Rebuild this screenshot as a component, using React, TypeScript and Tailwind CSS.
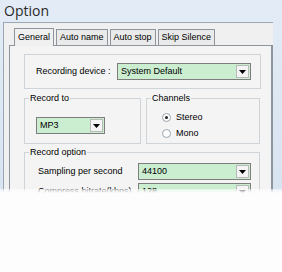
import { ReactNode } from 'react';

const font = { fontFamily: '"Liberation Sans", Arial, sans-serif' };

function Combo({ value, className }: { value: string; className: string }) {
  return (
    <div className={`flex h-[17px] items-stretch border border-[#7d7d7d] bg-[#cbeed0] ${className}`}>
      <div className="flex-1 pl-[3px] text-[9px] leading-[15px] text-black">{value}</div>
      <div className="m-[1px] flex w-[13px] items-center justify-center border border-[#b9b9b9] bg-[#f4f4f4]">
        <svg width="7" height="4" viewBox="0 0 7 4"><path d="M0 0h7L3.5 4z" fill="#000" /></svg>
      </div>
    </div>
  );
}

function Group({ title, className, children }: { title: string; className: string; children: ReactNode }) {
  return (
    <div className={`relative border border-[#cfd4d8] ${className}`}>
      <span className="absolute left-[4px] top-[-7px] bg-[#f4f4f4] px-[1px] text-[9px] leading-[12px] text-black">{title}</span>
      {children}
    </div>
  );
}

function Radio({ checked, label }: { checked: boolean; label: string }) {
  return (
    <div className="flex items-center gap-[5px]">
      <div className="flex h-[9px] w-[9px] items-center justify-center rounded-full border border-[#9aa3ab] bg-white">
        {checked ? <div className="h-[3px] w-[3px] rounded-full bg-[#222]" /> : null}
      </div>
      <span className="text-[9px] leading-[12px] text-black">{label}</span>
    </div>
  );
}

export default function App() {
  const tabs = ['General', 'Auto name', 'Auto stop', 'Skip Silence'];
  return (
    <div className="relative flex h-[272px] w-[282px] flex-col overflow-hidden bg-gradient-to-b from-[#e3ecf6] to-[#d3e0ee]" style={font}>
      <div className="h-[22px] pl-[4px] pt-[2px] text-[14px] leading-[18px] text-[#2a2a2a]" style={{ fontFamily: '"Open Sans", "Noto Sans", sans-serif' }}>
        Option
      </div>
      <div className="flex flex-1">
        <div className="w-[3px]" />
        <div className="flex w-[270px] flex-col border-l border-t border-[#9aa7b4] bg-[#f0f0f0] pl-[5px] pt-[5px]">
          <div className="flex h-[17px] items-end pl-[5px]">
            {tabs.map((tab, i) => (
              <div
                key={tab}
                className={`border border-b-0 border-[#8f959c] px-[3px] text-[9px] text-black ${
                  i === 0 ? 'z-10 -mb-[1px] h-[18px] bg-[#f0f0f0] leading-[17px]' : 'h-[16px] bg-[#eaeaea] leading-[15px]'
                } ${i > 0 ? 'ml-[2px]' : ''}`}
              >
                {tab}
              </div>
            ))}
          </div>
          <div className="flex flex-1 flex-col border border-r-2 border-[#8f959c] bg-[#f4f4f4] pl-[14px] pr-[8px] pt-[8px]">
            <div className="flex h-[35px] w-[237px] items-center border border-[#cfd4d8] pl-[11px]">
              <span className="w-[81px] text-[9px] text-black">Recording device :</span>
              <Combo value="System Default" className="w-[134px]" />
            </div>
            <div className="mt-[9px] flex gap-[5px]">
              <Group title="Record to" className="h-[46px] w-[117px] pl-[11px] pt-[18px]">
                <Combo value="MP3" className="w-[69px]" />
              </Group>
              <Group title="Channels" className="flex h-[46px] w-[114px] flex-col gap-[4px] pl-[15px] pt-[12px]">
                <Radio checked label="Stereo" />
                <Radio checked={false} label="Mono" />
              </Group>
            </div>
            <Group title="Record option" className="mt-[8px] flex h-[60px] w-[236px] flex-col gap-[3px] pl-[13px] pt-[10px]">
              <div className="flex items-center">
                <span className="w-[100px] text-[9px] text-black">Sampling per second</span>
                <Combo value="44100" className="w-[113px]" />
              </div>
              <div className="flex items-center">
                <span className="w-[100px] text-[9px] text-black">Compress bitrate(kbps)</span>
                <Combo value="128" className="w-[113px]" />
              </div>
            </Group>
          </div>
        </div>
        <div className="w-[9px]" />
      </div>
      <div className="absolute inset-x-0 top-[189px] h-[4px] bg-gradient-to-b from-[#ffffff80] to-[#fdfdfd]" />
      <div className="absolute inset-x-0 bottom-0 top-[193px] bg-[#fdfdfd]" />
    </div>
  );
}
